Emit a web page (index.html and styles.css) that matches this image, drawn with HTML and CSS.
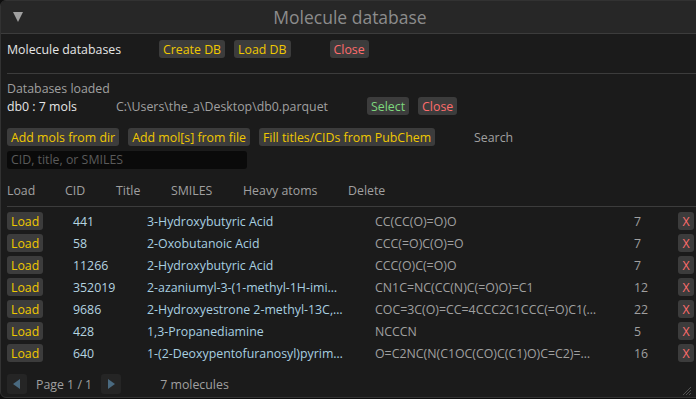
FILE: index.html
```html
<!DOCTYPE html>
<html>
<head>
<meta charset="utf-8">
<link rel="stylesheet" href="styles.css">
</head>
<body>
<div class="window">
  <div class="titlebar">
    <span class="tri"></span>
    <span class="title">Molecule database</span>
  </div>
  <div class="content">
    <div class="row r1">
      <span class="label">Molecule databases</span>
      <span class="btn y b-create">Create DB</span>
      <span class="btn y">Load DB</span>
      <span class="btn r b-close">Close</span>
    </div>
    <div class="sep"></div>
    <div class="dim loaded">Databases loaded</div>
    <div class="row r2">
      <span class="label dbname">db0 : 7 mols</span>
      <span class="dim path">C:\Users\the_a\Desktop\db0.parquet</span>
      <span class="btn g">Select</span>
      <span class="btn r">Close</span>
    </div>
    <div class="row r3">
      <span class="btn y">Add mols from dir</span>
      <span class="btn y">Add mol[s] from file</span>
      <span class="btn y">Fill titles/CIDs from PubChem</span>
      <span class="dim search-label">Search</span>
    </div>
    <div class="input">CID, title, or SMILES</div>
    <div class="thead">
      <span class="h-load">Load</span>
      <span class="h-cid">CID</span>
      <span class="h-title">Title</span>
      <span class="h-smiles">SMILES</span>
      <span class="h-heavy">Heavy atoms</span>
      <span class="h-del">Delete</span>
    </div>
    <div class="hline"></div>
    <div class="tbody">
      <div class="trow"><span class="btn y">Load</span><span class="cid">441</span><span class="ttl">3-Hydroxybutyric Acid</span><span class="smi">CC(CC(O)=O)O</span><span class="ha">7</span><span class="btn x">X</span></div>
      <div class="trow"><span class="btn y">Load</span><span class="cid">58</span><span class="ttl">2-Oxobutanoic Acid</span><span class="smi">CCC(=O)C(O)=O</span><span class="ha">7</span><span class="btn x">X</span></div>
      <div class="trow"><span class="btn y">Load</span><span class="cid">11266</span><span class="ttl">2-Hydroxybutyric Acid</span><span class="smi">CCC(O)C(=O)O</span><span class="ha">7</span><span class="btn x">X</span></div>
      <div class="trow"><span class="btn y">Load</span><span class="cid">352019</span><span class="ttl">2-azaniumyl-3-(1-methyl-1H-imi…</span><span class="smi">CN1C=NC(CC(N)C(=O)O)=C1</span><span class="ha">12</span><span class="btn x">X</span></div>
      <div class="trow"><span class="btn y">Load</span><span class="cid">9686</span><span class="ttl">2-Hydroxyestrone 2-methyl-13C,…</span><span class="smi">COC=3C(O)=CC=4CCC2C1CCC(=O)C1(…</span><span class="ha">22</span><span class="btn x">X</span></div>
      <div class="trow"><span class="btn y">Load</span><span class="cid">428</span><span class="ttl">1,3-Propanediamine</span><span class="smi">NCCCN</span><span class="ha">5</span><span class="btn x">X</span></div>
      <div class="trow"><span class="btn y">Load</span><span class="cid">640</span><span class="ttl">1-(2-Deoxypentofuranosyl)pyrim…</span><span class="smi">O=C2NC(N(C1OC(CO)C(C1)O)C=C2)=…</span><span class="ha">16</span><span class="btn x">X</span></div>
    </div>
    <div class="footer">
      <span class="arrow"><svg width="8" height="10" viewBox="0 0 8 10"><polygon points="7,0 7,10 0,5" fill="#4a6a80"/></svg></span>
      <span class="dim page">Page 1 / 1</span>
      <span class="arrow"><svg width="8" height="10" viewBox="0 0 8 10"><polygon points="1,0 1,10 8,5" fill="#4a6a80"/></svg></span>
      <span class="dim count">7 molecules</span>
    </div>
  </div>
  <svg class="grip" width="10" height="10" viewBox="0 0 10 10"><path d="M10 2 L2 10 M10 5 L5 10 M10 8 L8 10" stroke="#505050" stroke-width="1"/></svg>
</div>
</body>
</html>
```

FILE: styles.css
```css
html, body {
  margin: 0;
  padding: 0;
  background: #0e0e0e;
  overflow: hidden;
}
body {
  width: 696px;
  height: 399px;
  font-family: "Open Sans", "Noto Sans", sans-serif;
  font-size: 12.35px;
  color: #a0a0a0;
}
.window {
  position: relative;
  width: 704px;
  height: 398px;
  box-sizing: border-box;
  background: #1b1b1b;
  border: 1px solid #323232;
  border-radius: 6px;
  overflow: hidden;
}
.titlebar {
  height: 32px;
  background: #272727;
  border-bottom: 1px solid #3c3c3c;
  display: flex;
  align-items: center;
  position: relative;
}
.tri {
  margin-left: 12px;
  width: 0;
  height: 0;
  border-left: 5px solid transparent;
  border-right: 5px solid transparent;
  border-top: 10px solid #a0a0a0;
}
.title {
  position: absolute;
  left: 0;
  right: 0;
  text-align: center;
  font-size: 17.5px;
  color: #8c8c8c;
  padding-right: 4px;
}
.content {
  padding: 6px 0 0 6px;
}
.row {
  display: flex;
  align-items: center;
  height: 18px;
}
.btn {
  display: inline-flex;
  align-items: center;
  height: 18px;
  padding: 0 4px;
  background: #3c3c3c;
  border-radius: 3px;
  white-space: nowrap;
}
.y { color: #f0c800; }
.r { color: #ff6c6c; }
.g { color: #7ed87e; }
.label { color: #e6e6e6; }
.dim { color: #a0a0a0; }
.r1 .label { width: 152px; }
.b-create { margin-right: 9px; }
.b-close { margin-left: 39px; }
.sep {
  height: 1px;
  background: #3c3c3c;
  margin: 15px 7px 6px 0;
}
.loaded { height: 17px; line-height: 17px; }
.r2 { margin-top: 0; }
.dbname { width: 109px; }
.path { width: 251px; }
.r2 .btn + .btn { margin-left: 9px; }
.r3 { margin-top: 13px; gap: 9px; }
.search-label { margin-left: 30px; }
.input {
  width: 236px;
  height: 18px;
  line-height: 18px;
  margin-top: 5px;
  padding-left: 4px;
  background: #0a0a0a;
  border-radius: 3px;
  color: #5a5a5a;
  box-sizing: content-box;
}
.thead {
  display: flex;
  margin-top: 12px;
  height: 18px;
  align-items: center;
}
.h-load { width: 58px; }
.h-cid { width: 51px; }
.h-title { width: 55px; }
.h-smiles { width: 72px; }
.h-heavy { width: 105px; }
.hline {
  height: 1px;
  background: #3c3c3c;
  margin: 7px 7px 5px 0;
}
.tbody {
  display: flex;
  flex-direction: column;
  gap: 4px;
}
.trow {
  display: grid;
  grid-template-columns: 66px 74px 228px 259px 44px 20px;
  align-items: center;
  height: 18px;
}
.trow .btn { justify-self: start; }
.cid { color: #b4d4e0; }
.ttl { color: #a8cfe0; }
.smi { color: #a0a0a0; }
.ha { color: #a0a0a0; }
.btn.x {
  color: #ff6c6c;
  padding: 0 4px;
  width: 8px;
  justify-content: center;
}
.footer {
  display: flex;
  align-items: center;
  margin-top: 12px;
  height: 20px;
}
.arrow {
  width: 20px;
  height: 20px;
  background: #252525;
  border-radius: 3px;
  display: inline-flex;
  align-items: center;
  justify-content: center;
}
.page { margin: 0 9px; }
.count { margin-left: 39px; }
.grip {
  position: absolute;
  right: 12px;
  bottom: 2px;
}
```
